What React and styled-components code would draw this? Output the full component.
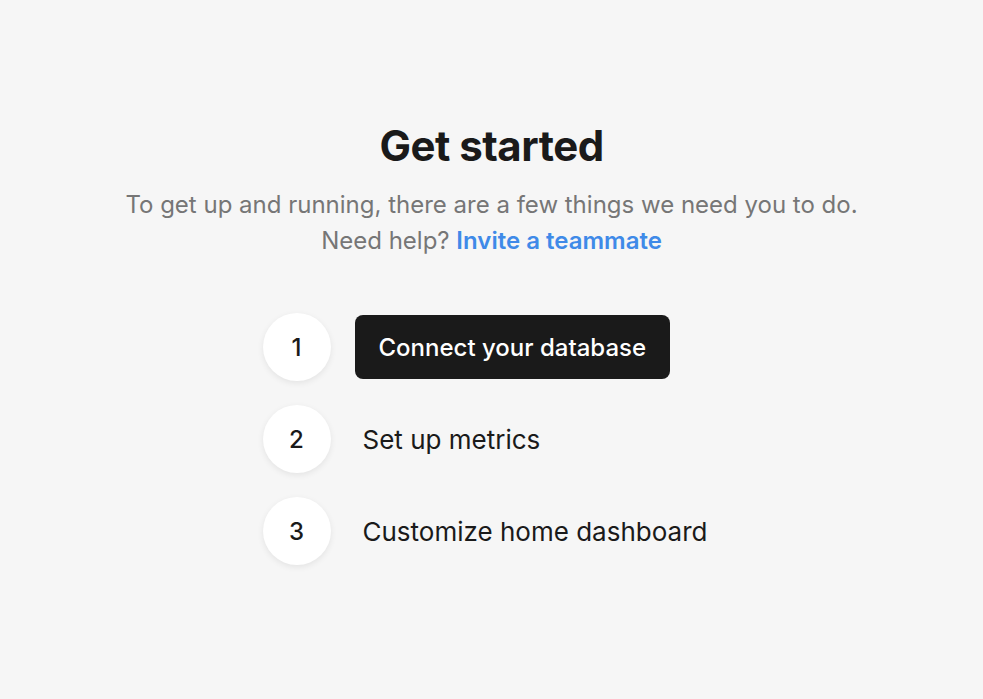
import React from 'react'
import styled, { createGlobalStyle } from 'styled-components'

const GlobalStyle = createGlobalStyle`
  html, body {
    margin: 0;
    padding: 0;
    background: #f6f6f6;
  }
  body {
    font-family: Inter, "Liberation Sans", sans-serif;
    -webkit-font-smoothing: antialiased;
  }
`

const Page = styled.main`
  min-height: 699px;
  display: flex;
  flex-direction: column;
  align-items: center;
  padding-top: 122px;
  box-sizing: border-box;
`

const Title = styled.h1`
  margin: 0;
  font-size: 42px;
  font-weight: 700;
  letter-spacing: -0.5px;
  color: #1a1a1a;
  line-height: 48px;
`

const Lead = styled.p`
  margin: 17px 0 0;
  font-size: 24px;
  line-height: 36px;
  color: #767676;
  text-align: center;
`

const Link = styled.a`
  color: #3f8ae8;
  font-weight: 600;
  text-decoration: none;
`

const Steps = styled.ol`
  list-style: none;
  margin: 54px 0 0;
  padding: 0;
  display: flex;
  flex-direction: column;
  gap: 24px;
  align-self: center;
  width: 458px;
`

const Step = styled.li`
  display: flex;
  align-items: center;
  gap: 24px;
`

const Badge = styled.span`
  width: 68px;
  height: 68px;
  flex: none;
  border-radius: 50%;
  background: #fff;
  box-shadow: 0 2px 6px rgba(0, 0, 0, 0.08);
  display: flex;
  align-items: center;
  justify-content: center;
  font-size: 24px;
  font-weight: 500;
  color: #1a1a1a;
`

const Action = styled.button`
  font: inherit;
  font-size: ${p => (p.$active ? 24 : 26)}px;
  font-weight: ${p => (p.$active ? 500 : 400)};
  white-space: nowrap;
  border: none;
  border-radius: 8px;
  height: 64px;
  padding: 0 ${p => (p.$active ? 24 : 8)}px;
  background: ${p => (p.$active ? '#1a1a1a' : 'transparent')};
  color: ${p => (p.$active ? '#fff' : '#1a1a1a')};
  cursor: pointer;
`

const steps = ['Connect your database', 'Set up metrics', 'Customize home dashboard']

export default function App() {
  return (
    <>
      <GlobalStyle />
      <Page>
        <Title>Get started</Title>
        <Lead>
          To get up and running, there are a few things we need you to do.
          <br />
          Need help? <Link href="#">Invite a teammate</Link>
        </Lead>
        <Steps>
          {steps.map((s, i) => (
            <Step key={s}>
              <Badge>{i + 1}</Badge>
              <Action $active={i === 0}>{s}</Action>
            </Step>
          ))}
        </Steps>
      </Page>
    </>
  )
}
